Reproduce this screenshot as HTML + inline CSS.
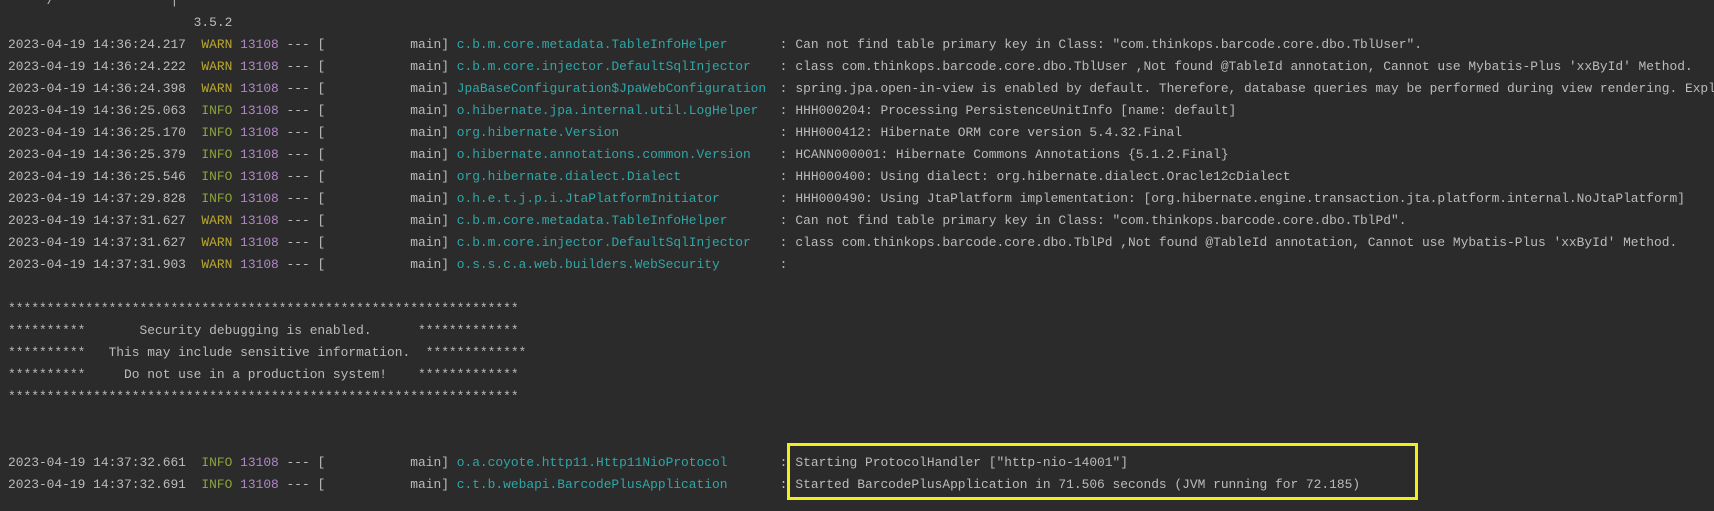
<!DOCTYPE html>
<html><head><meta charset="utf-8">
<style>
html,body{margin:0;padding:0;}
body{width:1714px;height:511px;overflow:hidden;background:#2b2b2b;position:relative;}
#c{position:absolute;left:8px;top:-10px;width:1706px;overflow:hidden;font-family:"Liberation Mono","DejaVu Sans Mono",monospace;font-size:12.9px;line-height:22px;color:#bbbbbb;}
.l{height:22px;white-space:pre;overflow:hidden;}
.w{color:#bca82f;}
.i{color:#8ba43c;}
.p{color:#b087c6;}
.c{color:#2ea7a7;display:inline-block;width:42ch;}
.k{position:relative;left:-2px;}
.m{margin-left:6px;}
#box{position:absolute;left:787px;top:443px;width:631px;height:57px;box-sizing:border-box;border:3px solid #f2ee1c;}
</style></head><body>
<div id="c"><div class="l">     /               |</div><div class="l">                        3.5.2</div><div class="l">2023-04-19 14:36:24.217  <span class="w">WARN</span> <span class="p">13108</span> --- [           main] <span class="c">c.b.m.core.metadata.TableInfoHelper</span><span class="k">:</span><span class="m">Can not find table primary key in Class: "com.thinkops.barcode.core.dbo.TblUser".</span></div><div class="l">2023-04-19 14:36:24.222  <span class="w">WARN</span> <span class="p">13108</span> --- [           main] <span class="c">c.b.m.core.injector.DefaultSqlInjector</span><span class="k">:</span><span class="m">class com.thinkops.barcode.core.dbo.TblUser ,Not found @TableId annotation, Cannot use Mybatis-Plus 'xxById' Method.</span></div><div class="l">2023-04-19 14:36:24.398  <span class="w">WARN</span> <span class="p">13108</span> --- [           main] <span class="c">JpaBaseConfiguration$JpaWebConfiguration</span><span class="k">:</span><span class="m">spring.jpa.open-in-view is enabled by default. Therefore, database queries may be performed during view rendering. Explicitly configure</span></div><div class="l">2023-04-19 14:36:25.063  <span class="i">INFO</span> <span class="p">13108</span> --- [           main] <span class="c">o.hibernate.jpa.internal.util.LogHelper</span><span class="k">:</span><span class="m">HHH000204: Processing PersistenceUnitInfo [name: default]</span></div><div class="l">2023-04-19 14:36:25.170  <span class="i">INFO</span> <span class="p">13108</span> --- [           main] <span class="c">org.hibernate.Version</span><span class="k">:</span><span class="m">HHH000412: Hibernate ORM core version 5.4.32.Final</span></div><div class="l">2023-04-19 14:36:25.379  <span class="i">INFO</span> <span class="p">13108</span> --- [           main] <span class="c">o.hibernate.annotations.common.Version</span><span class="k">:</span><span class="m">HCANN000001: Hibernate Commons Annotations {5.1.2.Final}</span></div><div class="l">2023-04-19 14:36:25.546  <span class="i">INFO</span> <span class="p">13108</span> --- [           main] <span class="c">org.hibernate.dialect.Dialect</span><span class="k">:</span><span class="m">HHH000400: Using dialect: org.hibernate.dialect.Oracle12cDialect</span></div><div class="l">2023-04-19 14:37:29.828  <span class="i">INFO</span> <span class="p">13108</span> --- [           main] <span class="c">o.h.e.t.j.p.i.JtaPlatformInitiator</span><span class="k">:</span><span class="m">HHH000490: Using JtaPlatform implementation: [org.hibernate.engine.transaction.jta.platform.internal.NoJtaPlatform]</span></div><div class="l">2023-04-19 14:37:31.627  <span class="w">WARN</span> <span class="p">13108</span> --- [           main] <span class="c">c.b.m.core.metadata.TableInfoHelper</span><span class="k">:</span><span class="m">Can not find table primary key in Class: "com.thinkops.barcode.core.dbo.TblPd".</span></div><div class="l">2023-04-19 14:37:31.627  <span class="w">WARN</span> <span class="p">13108</span> --- [           main] <span class="c">c.b.m.core.injector.DefaultSqlInjector</span><span class="k">:</span><span class="m">class com.thinkops.barcode.core.dbo.TblPd ,Not found @TableId annotation, Cannot use Mybatis-Plus 'xxById' Method.</span></div><div class="l">2023-04-19 14:37:31.903  <span class="w">WARN</span> <span class="p">13108</span> --- [           main] <span class="c">o.s.s.c.a.web.builders.WebSecurity</span><span class="k">:</span></div><div class="l"> </div><div class="l">******************************************************************</div><div class="l">**********       Security debugging is enabled.      *************</div><div class="l">**********   This may include sensitive information.  *************</div><div class="l">**********     Do not use in a production system!    *************</div><div class="l">******************************************************************</div><div class="l"> </div><div class="l"> </div><div class="l">2023-04-19 14:37:32.661  <span class="i">INFO</span> <span class="p">13108</span> --- [           main] <span class="c">o.a.coyote.http11.Http11NioProtocol</span><span class="k">:</span><span class="m">Starting ProtocolHandler ["http-nio-14001"]</span></div><div class="l">2023-04-19 14:37:32.691  <span class="i">INFO</span> <span class="p">13108</span> --- [           main] <span class="c">c.t.b.webapi.BarcodePlusApplication</span><span class="k">:</span><span class="m">Started BarcodePlusApplication in 71.506 seconds (JVM running for 72.185)</span></div></div>
<div id="box"></div>
</body></html>
